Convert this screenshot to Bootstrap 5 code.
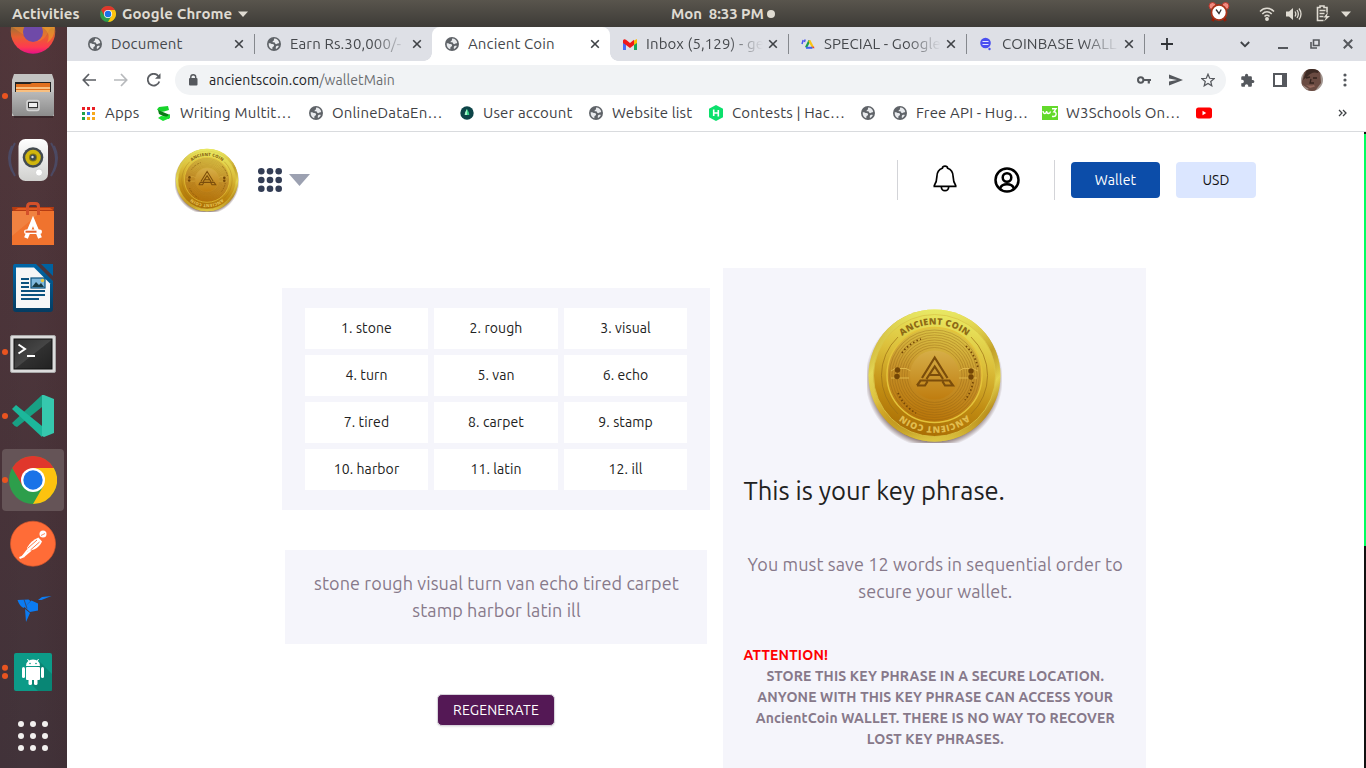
<!DOCTYPE html>
<html lang="en">
<head>
<meta charset="utf-8">
<title>Ancient Coin</title>
<link href="https://cdn.jsdelivr.net/npm/bootstrap@5.3.0/dist/css/bootstrap.min.css" rel="stylesheet">
<style>
html,body{height:100%;overflow:hidden}
body{font-family:Ubuntu,"Noto Sans","Open Sans",sans-serif;font-size:14px;line-height:20px;color:#212529;background:#fff}
svg{display:block;flex:none}
.desk{width:1366px;height:768px}
/* system bar */
.topbar{height:27px;background:linear-gradient(#59554d,#3d3b37);color:#dfdbd2;font-weight:700;font-size:15px;letter-spacing:.1px;position:relative;z-index:2}
.slot{white-space:pre}
.t-act{width:69px;margin-left:12px}.tb-ch{margin-left:19px}.t-gc{width:111px;margin-left:6px}.tri1{margin-left:5px}
.t-clock{width:92px;margin-left:423px;letter-spacing:-.08px}.tb-alarm{margin-left:433px;margin-top:-3px}.tb-wifi{margin-left:29px}.tb-vol{margin-left:11px}.tb-bat{margin-left:14px}.tb-tri{margin-left:10px}
/* dock */
.dock{width:67px;height:741px;background:linear-gradient(90deg,rgba(0,0,0,.02),rgba(0,0,0,0) 50%,rgba(40,10,10,.08)),linear-gradient(#52373b,#49343a 60%,#42333a)}
.dock-in{margin-top:-27px}
/* tabs */
.tabstrip{height:34px;background:#dee0e6;padding-left:9px}
.ctab{width:178px;height:34px;padding-left:13px;position:relative;color:#45484c;font-size:15px;letter-spacing:.12px}
.ctab:first-child{padding-left:12px}
.ctab:first-child .x{margin-left:14px}
.ctab .ttl{width:109px;margin-left:9px;overflow:hidden;white-space:nowrap}
.ctab .x{margin-left:13px}
.ctab.sep::after{content:"";position:absolute;right:-1px;top:7px;height:20px;width:1px;background:#85888d}
.ctab .ttl.fade-r{width:118px;-webkit-mask-image:linear-gradient(90deg,#000 82px,transparent 117px)}
.ctab .fade-r + .x{margin-left:4px}
.ctab.on{background:#fff;border-radius:8px 8px 0 0}
.ctab.on::before,.ctab.on::after{content:"";position:absolute;bottom:0;width:8px;height:8px}
.ctab.on::before{left:-8px;background:radial-gradient(circle at 0 0,transparent 7.5px,#fff 8px)}
.ctab.on::after{right:-8px;background:radial-gradient(circle at 100% 0,transparent 7.5px,#fff 8px)}
.plus{margin-left:17px}.wc1{margin-left:67px}.wc2{margin-left:28px}.wc3{margin-left:22px}.wc4{margin-left:23px}
/* toolbar */
.toolbar{height:38px;padding-left:15px}
.omni{width:1051px;height:30px;border-radius:15px;background:#f1f3f5;margin-left:14px;padding-left:11px}
.omni .url{width:928px;margin-left:9px;color:#6a6d70;font-size:14px;letter-spacing:.1px}
.omni .url b{font-weight:400;color:#202124}
.fwd{margin-left:18px}.rel{margin-left:19px}.snd{margin-left:18px}.str{margin-left:18px}.pz{margin-left:14px}.sp{margin-left:18px}.av{margin-left:14px}.kb{margin-left:20px}
/* bookmarks */
.marks{height:33px;padding-left:14px;padding-bottom:4px;border-bottom:1px solid #d9dbde;color:#3f4246;font-size:15px;letter-spacing:.16px}
.marks .bm{height:26px}
.marks .bm svg{margin-right:9px}
.marks .k1 svg{margin-right:10px}
.marks .k9 svg{margin-right:8px}
.k1{width:76px}.k2{width:152px}.k3{width:151px}.k4{width:129px}.k5{width:120px}.k6{width:152px}.k7{width:32px}.k8{width:149px}.k9{width:154px}.k10{width:142px}
/* page */
.page{height:636px;position:relative;overflow:hidden;letter-spacing:.1px}
.hdr{height:96px;padding-left:108px}
.grd{margin-left:19px}.tr2{margin-left:7px}.v1{margin-left:587px}.bell{margin-left:35px;margin-top:-3px}.usr{margin-left:37px}.v2{margin-left:34px}
.vline{width:1px;height:40px;background:#d3d4d8}
.btn-w{width:89px;height:36px;border-radius:4px;font-size:14px;padding:0;line-height:36px;border:0;letter-spacing:.15px}
.btn-wallet,.btn-wallet:hover{background:#0c4da9;color:#fff}
.btn-usd,.btn-usd:hover{background:#dbe6ff;color:#121212;width:80px}
.panel{background:#f5f5fb}
.left{width:428px;margin-left:215px;margin-top:60px}
.words{height:222px;padding:20px 23px;display:grid;grid-template-columns:123px 124px 123px;gap:6px;grid-auto-rows:41px}
.words div{background:#fff;font-size:14px;line-height:40px;text-align:center;color:#212121}
.phrase{width:422px;height:94px;margin:40px 0 0 3px;padding:20px 0 0 1px;color:#87798a;font-size:18px;line-height:27px;text-align:center}
.btn-regen,.btn-regen:hover{width:118px;height:32px;margin:50px 0 0 155px;background:#541855;border:1px solid #d8d4dc;border-radius:5px;color:#fff;font-size:14px;line-height:30px;padding:0;letter-spacing:.15px;box-shadow:0 1px 2px rgba(0,0,0,.1)}
.right{width:423px;height:520px;margin-left:13px;margin-top:40px;padding:40px 20px 0 20.5px}
.right h2{font-size:25.6px;line-height:34px;font-weight:400;margin:31px 0 0;color:#212121;letter-spacing:0}
.save{font-size:18px;line-height:27px;color:#87798a;text-align:center;margin:43px 0 0;padding-left:1px}
.warn{font-size:14px;line-height:21px;font-weight:700;color:#87798a;text-align:center;margin:40px 0 0;letter-spacing:.15px}
.warn .att{color:#f00;text-align:left;letter-spacing:.2px}
.warn .msg{padding-left:1px}
.sbar{position:absolute;right:0;top:0;width:2px;height:636px;background:linear-gradient(#111 2px,#00ff5e 2px,#00ff5e 414px,#111 414px)}
</style>
</head>
<body>
<svg width="0" height="0" class="position-absolute">
<defs>
<linearGradient id="rim" x1="0" y1="0" x2="1" y2="1"><stop offset="0" stop-color="#c9a52a"/><stop offset=".12" stop-color="#b98a1a"/><stop offset=".25" stop-color="#f0ee6a"/><stop offset=".45" stop-color="#d9b02c"/><stop offset=".62" stop-color="#a87406"/><stop offset=".75" stop-color="#f0e95f"/><stop offset=".88" stop-color="#a56f08"/><stop offset="1" stop-color="#e3cf4b"/></linearGradient>
<linearGradient id="rim2" x1="0" y1="0" x2="0" y2="1"><stop offset="0" stop-color="#e8e864"/><stop offset=".3" stop-color="#dfd14c" stop-opacity=".5"/><stop offset=".7" stop-color="#b07a0a" stop-opacity=".1"/><stop offset="1" stop-color="#dcc440"/></linearGradient>
<linearGradient id="face" x1=".6" y1="0" x2=".4" y2="1"><stop offset="0" stop-color="#e9e860"/><stop offset=".35" stop-color="#dcbf3a"/><stop offset=".7" stop-color="#c08b12"/><stop offset="1" stop-color="#a96d04"/></linearGradient>
<linearGradient id="inner" x1=".6" y1="0" x2=".4" y2="1"><stop offset="0" stop-color="#dcc647"/><stop offset=".5" stop-color="#c7922a"/><stop offset="1" stop-color="#b87408"/></linearGradient>
<linearGradient id="core" x1="0" y1="0" x2="0" y2="1"><stop offset="0" stop-color="#d6ae48"/><stop offset="1" stop-color="#bf7d10"/></linearGradient>
<radialGradient id="shade"><stop offset=".88" stop-color="#4b2b23" stop-opacity=".75"/><stop offset="1" stop-color="#4b2b23" stop-opacity="0"/></radialGradient>
<path id="arcT" d="M16.500 67.500a51 51 0 0 1 102 0"/>
<symbol id="coin" viewBox="0 0 135 135">
<circle cx="67" cy="71" r="69" fill="url(#shade)"/>
<circle cx="67.500" cy="67.500" r="66" fill="url(#rim)"/><circle cx="67.500" cy="67.500" r="66" fill="url(#rim2)"/>
<circle cx="67.500" cy="67.500" r="61" fill="url(#face)" stroke="#d9c548" stroke-width=".8"/>
<path d="M31 29A53 53 0 0 0 31 106M104 29A53 53 0 0 1 104 106" fill="none" stroke="#9c7016" stroke-width=".7"/>
<circle cx="67.500" cy="67" r="47.500" fill="url(#inner)" stroke="#e4c33a" stroke-width="1.500"/>
<g fill="none" stroke="#8f5f12" stroke-width=".6" opacity=".6"><circle cx="67.500" cy="67" r="45"/><circle cx="67.500" cy="67" r="42.500"/><circle cx="67.500" cy="67" r="40"/><circle cx="67.500" cy="67" r="37.500"/><circle cx="67.500" cy="67" r="35"/><circle cx="67.500" cy="67" r="32.500"/><circle cx="67.500" cy="67" r="30"/><circle cx="67.500" cy="67" r="27.500"/></g>
<g fill="none" stroke="#744606" stroke-width="1.700" stroke-dasharray="1.500 2.300"><path d="M35 45A39 39 0 0 1 54 31M99 38a43 43 0 0 1 12 22M31 85a41 41 0 0 0 18 20M106 74a40 40 0 0 1-8 18"/></g>
<path d="M24 63l4-2.500h11l5 2.500M24 70h18M92 63l4-2.500h10l5 2.500M92 70h18" fill="none" stroke="#e0b649" stroke-width="1"/>
<circle cx="67.500" cy="67" r="24.500" fill="url(#core)"/>
<g fill="#744606"><circle cx="30.500" cy="62" r="2.700"/><circle cx="30" cy="68.500" r="2.700"/><circle cx="104" cy="63" r="2.700"/><circle cx="104" cy="69" r="2.700"/></g>
<path d="M55 70L67.700 49.500L80.500 70M59.500 71L67.700 58.500L76 71M62 67h11.500M50 77.500l3.500-5h29l3.500 5h-8l-2.500-4M50 77.500h8l2.500-4" fill="none" stroke="#7b4d0b" stroke-width="2.200"/>
<text font-family="Open Sans, sans-serif" font-weight="800" font-size="9" letter-spacing="0" fill="#8d6a16"><textPath href="#arcT" startOffset="50%" text-anchor="middle" textLength="70">ANCIENT COIN</textPath></text>
<text font-family="Open Sans, sans-serif" font-weight="800" font-size="9" letter-spacing="0" fill="#e2bd4e" transform="rotate(180 67.500 67.500)"><textPath href="#arcT" startOffset="50%" text-anchor="middle" textLength="70">ANCIENT COIN</textPath></text>
</symbol>
<symbol id="globe" viewBox="0 0 14 14"><circle cx="7" cy="7" r="7" fill="#5f6368"/><path d="M1.700 6.300C3.300 6 4.500 7 5.500 7.100c1.400.2 1.900 1 1.400 2-.4.900-1.400.6-1.500 1.700l-.1 1.500C3 11.700 1.400 9.500 1.700 6.300zM7.200 1.600c2.700 0 4.600 1.800 5 4.300-.9.700-1.500.2-2.200.9-.8.700-1.900.2-2-.8-.2-1-1.600-.3-2.300-.8-.6-.6.3-1.200.9-1.500.6-.3.200-1.300.6-2.100zM9.500 9c1-.5 2-.3 2.300.1-.5 1.400-1.500 2.300-2.800 2.900-.4-1.100-.3-2.400.5-3z" fill="#e8eaed"/></symbol>
<symbol id="x" viewBox="0 0 10 10"><path d="M1.200 1.200l7.600 7.600M8.800 1.200L1.200 8.800" stroke="#3f4246" stroke-width="1.600"/></symbol>
<symbol id="chrome" viewBox="0 0 48 48"><circle cx="24" cy="24" r="24" fill="#2d9e4b"/><path d="M3.200 12A24 24 0 0 1 44.800 12L24 12L13.600 30z" fill="#e0372c"/><path d="M44.800 12A24 24 0 0 1 24 48L34.400 30L24 12z" fill="#fdc20f"/><circle cx="24" cy="24" r="12" fill="#fff"/><circle cx="24" cy="24" r="9.700" fill="#1a73e8"/></symbol>
<linearGradient id="gf" x1="0" y1="0" x2="0" y2="1"><stop offset=".4" stop-color="#a07036"/><stop offset=".62" stop-color="#e76030"/><stop offset=".85" stop-color="#ff3a50"/><stop offset="1" stop-color="#e3108a"/></linearGradient>
<linearGradient id="gm" x1="0" y1="0" x2="0" y2="1"><stop offset="0" stop-color="#b9b9b9"/><stop offset="1" stop-color="#8b8b8b"/></linearGradient>
<linearGradient id="gw" x1="0" y1="0" x2="0" y2="1"><stop offset="0" stop-color="#fff"/><stop offset="1" stop-color="#d0d0ce"/></linearGradient>
<linearGradient id="gb" x1="0" y1="0" x2="0" y2="1"><stop offset="0" stop-color="#0067a8"/><stop offset="1" stop-color="#053c61"/></linearGradient>
<linearGradient id="gt" x1="0" y1="0" x2="1" y2="1"><stop offset="0" stop-color="#303030"/><stop offset=".5" stop-color="#454545"/><stop offset=".52" stop-color="#303030"/><stop offset="1" stop-color="#222"/></linearGradient>
</defs>
</svg>

<div class="desk overflow-hidden">
<header class="topbar d-flex align-items-center">
  <span class="slot t-act">Activities</span>
  <svg class="tb-ch" width="16" height="16"><use href="#chrome"/></svg>
  <span class="slot t-gc">Google Chrome</span>
  <svg width="10" height="6" class="tri1"><path d="M0 .5h10L5 6z" fill="#dfdbd2"/></svg>
  <span class="slot t-clock">Mon  8:33 PM</span>
  <svg width="8" height="8" class="ms-1"><circle cx="4" cy="4" r="4" fill="#dfdbd2"/></svg>
  <svg class="tb-alarm" width="22" height="22" viewBox="0 0 22 22"><circle cx="4.500" cy="5" r="3.500" fill="#f08a80" stroke="#b8382c"/><circle cx="17.500" cy="5" r="3.500" fill="#f08a80" stroke="#b8382c"/><path d="M6 17l-1.500 3M16 17l1.500 3" stroke="#8d1f0c" stroke-width="3"/><circle cx="11" cy="11.500" r="7.600" fill="#fff" stroke="#a83218" stroke-width="1.800"/><path d="M8 8.500l3 4 2.200-4" fill="none" stroke="#333" stroke-width="1.300"/></svg>
  <svg class="tb-wifi" width="16" height="14" viewBox="0 0 16 14" fill="none" stroke="#dfdbd2" stroke-width="1.500"><path d="M1 4.500C5 .3 11 .3 15 4.500"/><path d="M3.300 7c2.800-2.900 6.600-2.900 9.400 0"/><path d="M5.500 9.500c1.500-1.600 3.500-1.600 5 0"/><circle cx="8" cy="12" r="1.200" fill="#dfdbd2"/></svg>
  <svg class="tb-vol" width="16" height="14" viewBox="0 0 16 14"><path d="M0 4.500h3L7 1v12L3 9.500H0z" fill="#dfdbd2"/><path d="M9 4.500q1.600 2.500 0 5M11 3q2.700 4 0 8M13 1.500q4 5.500 0 11" stroke="#dfdbd2" stroke-width="1.300" fill="none"/></svg>
  <svg class="tb-bat" width="15" height="17" viewBox="0 0 15 17"><path d="M7.500 15.500h-6v-13H4V1h4v1.500h3v5" fill="none" stroke="#dfdbd2" stroke-width="1.600"/><path d="M3.500 5.500h6M3.500 8.500h5M3.500 11.500h4" stroke="#dfdbd2" stroke-width="1.500"/><path d="M12 7L7.500 12.500h2.500L8 16.500l6-5.500h-3z" fill="#dfdbd2"/></svg>
  <svg width="10" height="6" class="tb-tri"><path d="M0 .5h10L5 6z" fill="#dfdbd2"/></svg>
</header>
<div class="d-flex">
<nav class="dock flex-shrink-0 overflow-hidden"><div class="dock-in">
<svg width="67" height="64"><circle cx="33" cy="31.500" r="22.300" fill="url(#gf)"/><path d="M11 26h44v4q-3-4-6 0-3 8-9 11-10 2-16-6z" fill="#f58a2e" opacity=".45"/><ellipse cx="33" cy="32" rx="10" ry="10" fill="#6f4aa8"/><path d="M42 27q10 6 5 16 9-6 7-17z" fill="#f0a02c" opacity=".6"/></svg>
<svg width="67" height="64"><circle cx="5" cy="32" r="3" fill="#e95420"/><path d="M14 10h38l2 6v36H12V16z" fill="#c3c3c2"/><rect x="15" y="18" width="36" height="12" fill="#222"/><path d="M16 20h14l2-1h18v10H16z" fill="#e07020"/><path d="M16 24h34M16 27h34" stroke="#ffd9a0" stroke-width="1.500"/><path d="M12 28h42v22l-1 2H14l-2-3z" fill="url(#gm)"/><rect x="27" y="36.500" width="12" height="10" rx="2" fill="#aaa" stroke="#d5d5d5" stroke-width="1.500"/><rect x="28.500" y="38.500" width="9" height="5" fill="#eee" stroke="#333"/><path d="M14 53h39" stroke="#2b1d20" stroke-width="1"/></svg>
<svg width="67" height="64"><g fill="none" stroke="#4b5b86" stroke-width="2" opacity=".55"><path d="M15 15q-10 16 0 33M51 15q10 16 0 33M12 18q-6 12 0 25M54 18q6 12 0 25"/></g><rect x="18.500" y="11" width="29.500" height="42" rx="7" fill="url(#gw)"/><circle cx="33" cy="29.500" r="10.300" fill="#434b50"/><circle cx="33" cy="29.500" r="7.800" fill="#d0b60e"/><circle cx="33" cy="29.500" r="4" fill="#8a7a10"/><circle cx="33" cy="29.500" r="3" fill="#3c4b52"/><circle cx="32.500" cy="29" r="1.200" fill="#ddd"/><circle cx="39" cy="44.500" r="3.500" fill="#fff" stroke="#c9c9c9" stroke-width=".7"/></svg>
<svg width="67" height="64"><path d="M12 15h42l-1 7H13z" fill="#b53c12"/><path d="M15 18l3-2h32l3 2z" fill="#e05a20"/><path d="M12 19h42v34H12z" fill="#f0732e"/><path d="M12 19h30L12 44z" fill="#f08c4e" opacity=".6"/><path d="M27.500 23v-8q0-3.500 3-3.500h5q3 0 3 3.500v8" fill="none" stroke="#d3502a" stroke-width="3"/><path d="M26 46l7-17 7 17" fill="none" stroke="#fff" stroke-width="4"/><rect x="24" y="37.500" width="18" height="4.500" rx="2.200" fill="#fff"/><path d="M25.500 39.700h11" stroke="#e4602a" stroke-width="2"/></svg>
<svg width="67" height="64"><path d="M15 8h21l17 17v28q0 3-3 3H16q-3 0-3-3V11q0-3 2-3z" fill="url(#gb)"/><path d="M41 8h12v12z" fill="#0062a0"/><path d="M16 11.500h18l16 16V52H16z" fill="#f6f6f6"/><path d="M21 23h8M21 27h8M21 31h8M21 35h24M21 39h24M21 43h18" stroke="#0b527e" stroke-width="2"/><rect x="31" y="22" width="14" height="10" fill="#7fb8dc" stroke="#0b527e" stroke-width="1.200"/><path d="M32 31l4-5 3 3 2-2 3 4z" fill="#173a42"/><circle cx="42.500" cy="24.500" r="1.700" fill="#e9c83d"/></svg>
<svg width="67" height="64"><circle cx="5" cy="32" r="3" fill="#e95420"/><rect x="10.500" y="15.500" width="45" height="37" rx="1.500" fill="#dcdcdc" stroke="#a8a8a8"/><rect x="14" y="19" width="38" height="30" fill="url(#gt)" stroke="#111"/><path d="M18.500 24.500l6.500 4.500-6.500 4.500" fill="none" stroke="#fff" stroke-width="2"/><path d="M27 36h8" stroke="#fff" stroke-width="2"/></svg>
<svg width="67" height="64"><circle cx="5" cy="32" r="3" fill="#e95420"/><path d="M42 11v12L17 43q-3-1-5-4z" fill="#18a084"/><path d="M12 25l4-4 26 21v11z" fill="#1cb79b"/><path d="M42 11l2 0 10 4v34l-10 4-2-1z" fill="#36c8ae"/></svg>
<svg width="67" height="64"><rect x="2" y="1" width="62" height="62" rx="4" fill="#655457"/><circle cx="5" cy="32" r="3" fill="#e95420"/><use href="#chrome" x="9" y="8" width="48" height="48"/></svg>
<svg width="67" height="64"><circle cx="33" cy="31.700" r="22.500" fill="#ff6c37" stroke="#d8572c" stroke-width=".7"/><path d="M38.500 25.500l3.500 4q-2 5-8 8l-6 1.500-.8-3.500q4-7 11.300-10z" fill="#fff"/><path d="M28 37.500l-5.500 7M31 38l-7 6" stroke="#fff" stroke-width="1.800"/><path d="M28 36l9-8M30.500 38l9-8" stroke="#ff6c37" stroke-width=".9"/><circle cx="43" cy="22" r="3.500" fill="#fff"/><path d="M41 23.500l4-2" stroke="#ff6c37" stroke-width=".8"/><path d="M19.500 46l5-2" stroke="#fff" stroke-width="2"/></svg>
<svg width="67" height="64"><g fill="#0b7bf2"><path d="M17.500 24l11-.5 2 1.500-7 7q-4-2-6-8zM38 24l4-3 9.500-1-10 4zM31.500 24.500l6.500 3v7l-8 1.500-5.500-5zM25 33l5 4-4 9z"/></g><path d="M24 23.500l3 9" stroke="#4a343a" stroke-width=".7"/></svg>
<svg width="67" height="64"><circle cx="5" cy="27.700" r="3" fill="#e95420"/><circle cx="5" cy="36" r="3" fill="#e95420"/><rect x="14" y="13" width="38" height="38" rx="2" fill="#0c9b88"/><path d="M40 22l12 12v17H38L27 40z" fill="#087e6e" opacity=".7"/><g fill="#fff"><path d="M26 26q0-6 7-6.500 7 .5 7 6.500z"/><rect x="26" y="27" width="14" height="13" rx="1"/><rect x="22" y="27" width="3" height="11" rx="1.500"/><rect x="41" y="27" width="3" height="11" rx="1.500"/><rect x="28.500" y="38" width="3.500" height="7" rx="1.500"/><rect x="34" y="38" width="3.500" height="7" rx="1.500"/></g><path d="M29 21.500l-1.500-2.500M37 21.500l1.500-2.500" stroke="#fff" stroke-width="1"/><g fill="#0c9b88"><circle cx="30" cy="23.500" r=".8"/><circle cx="36" cy="23.500" r=".8"/></g></svg>
<svg width="67" height="64"><g fill="#f2f0ee"><circle cx="21" cy="20" r="3"/><circle cx="33" cy="20" r="3"/><circle cx="45" cy="20" r="3"/><circle cx="21" cy="32" r="3"/><circle cx="33" cy="32" r="3"/><circle cx="45" cy="32" r="3"/><circle cx="21" cy="44" r="3"/><circle cx="33" cy="44" r="3"/><circle cx="45" cy="44" r="3"/></g></svg>
</div></nav>
<div class="flex-grow-1">
<div class="tabstrip d-flex">
  <div class="ctab sep d-flex align-items-center"><svg width="14" height="14"><use href="#globe"/></svg><div class="ttl">Document</div><svg class="x" width="10" height="10"><use href="#x"/></svg></div>
  <div class="ctab d-flex align-items-center"><svg width="14" height="14"><use href="#globe"/></svg><div class="ttl fade-r">Earn Rs.30,000/-</div><svg class="x" width="10" height="10"><use href="#x"/></svg></div>
  <div class="ctab on d-flex align-items-center"><svg width="14" height="14"><use href="#globe"/></svg><div class="ttl">Ancient Coin</div><svg class="x" width="10" height="10"><use href="#x"/></svg></div>
  <div class="ctab sep d-flex align-items-center"><svg width="14" height="11" viewBox="0 0 14 11"><path d="M0 1.500V11h3V4z" fill="#4a6cf7"/><path d="M14 1.500V11h-3V4z" fill="#1aa75a"/><path d="M11 1.500L14 0v4l-3 2z" fill="#fbbc04"/><path d="M0 1.500Q1-.5 3 .800L7 4l4-3.200L11 6 7 9 3 6 0 4z" fill="#f01818"/></svg><div class="ttl fade-r">Inbox (5,129) - ge</div><svg class="x" width="10" height="10"><use href="#x"/></svg></div>
  <div class="ctab sep d-flex align-items-center"><svg width="14" height="12" viewBox="0 0 14 12"><path d="M2.200 2L1 6M4.200 1.500l-.8 2.500" stroke="#4a56f0" stroke-width="1.500"/><path d="M8.500 2.500L5 9.500" stroke="#1b9e4a" stroke-width="2.300"/><path d="M8.300 2.500l3.700 7" stroke="#fbc512" stroke-width="2.300"/><path d="M5 9.800h6.500" stroke="#3e63f0" stroke-width="2"/><path d="M10.800 8.800h2.400v2z" fill="#e33"/></svg><div class="ttl fade-r">SPECIAL - Google</div><svg class="x" width="10" height="10"><use href="#x"/></svg></div>
  <div class="ctab sep d-flex align-items-center"><svg width="14" height="14" viewBox="0 0 14 14"><circle cx="6.500" cy="6" r="5.300" fill="#4a4ff0"/><path d="M3.500 4.500h6M3.500 7.500h6" stroke="#dfe1ff" stroke-width="1.200"/><circle cx="10.500" cy="12" r="1.200" fill="#4a4ff0"/></svg><div class="ttl fade-r">COINBASE WALL</div><svg class="x" width="10" height="10"><use href="#x"/></svg></div>
  <svg class="plus align-self-center" width="12" height="12"><path d="M6 0v12M0 6h12" stroke="#2f3236" stroke-width="1.800"/></svg>
  <svg class="align-self-center wc1" width="10" height="7"><path d="M.8 1L5 5.200 9.200 1" fill="none" stroke="#3f4246" stroke-width="1.800"/></svg>
  <svg class="align-self-center wc2" width="10" height="10"><path d="M0 9h10" stroke="#55585d" stroke-width="2"/></svg>
  <svg class="align-self-center wc3" width="10" height="10"><path d="M3.500 1h5.500v5.500H3.500z" fill="none" stroke="#55585d" stroke-width="1.600"/><path d="M1 3v6h6" fill="none" stroke="#55585d" stroke-width="1.600"/></svg>
  <svg class="align-self-center wc4" width="10" height="10"><path d="M.8.8l8.400 8.400M9.200.8L.8 9.200" stroke="#55585d" stroke-width="2"/></svg>
</div>
<div class="toolbar d-flex align-items-center">
  <svg width="14" height="14" viewBox="0 0 14 14" fill="none" stroke="#5b5e63" stroke-width="1.700"><path d="M14 7H1.500M7 1L1.300 7 7 13"/></svg>
  <svg class="fwd" width="14" height="14" viewBox="0 0 14 14" fill="none" stroke="#b7b9bc" stroke-width="1.700"><path d="M0 7h12.500M7 1l5.700 6L7 13"/></svg>
  <svg class="rel" width="14" height="14" viewBox="0 0 14 14"><path d="M12.300 8.500A5.900 5.900 0 1 1 11.300 3" fill="none" stroke="#5b5e63" stroke-width="1.800"/><path d="M13.500.3v5.500H8z" fill="#5b5e63"/></svg>
  <div class="omni d-flex align-items-center">
    <svg width="14" height="14" viewBox="0 0 14 14"><rect x="3" y="5" width="8.500" height="7.500" rx="1" fill="#55585d"/><path d="M4.800 5.500V4q0-2.200 2.400-2.200T9.700 4v1.500" fill="none" stroke="#55585d" stroke-width="1.400"/></svg>
    <div class="url"><b>ancientscoin.com</b>/walletMain</div>
    <svg width="14" height="10" viewBox="0 0 14 10"><circle cx="3.700" cy="5" r="2.700" fill="none" stroke="#55585d" stroke-width="2"/><path d="M6 5h8M11.800 5v3.500" stroke="#55585d" stroke-width="2.200"/></svg>
    <svg class="snd" width="14" height="12" viewBox="0 0 14 12"><path d="M0 .5L14 6 0 11.500V7.500L8 6 0 4.500z" fill="#55585d"/></svg>
    <svg class="str" width="14" height="14" viewBox="0 0 24 24"><path d="M12 2l2.900 7 7.600.6-5.800 5 1.800 7.400-6.500-4-6.500 4 1.800-7.400-5.800-5L9.100 9z" fill="none" stroke="#55585d" stroke-width="2.100"/></svg>
  </div>
  <svg class="pz" width="15" height="15" viewBox="0 0 24 24"><path d="M20.500 11H19V7c0-1.100-.9-2-2-2h-4V3.500a2.500 2.500 0 0 0-5 0V5H4c-1.100 0-2 .9-2 2v3.800h1.500a2.700 2.700 0 0 1 0 5.400H2V20c0 1.100.9 2 2 2h3.800v-1.500a2.700 2.700 0 0 1 5.400 0V22H17c1.100 0 2-.9 2-2v-4h1.500a2.500 2.500 0 0 0 0-5z" fill="#55585d"/></svg>
  <svg class="sp" width="14" height="14"><path d="M1 1h12v12H1z" fill="#fff" stroke="#55585d" stroke-width="2"/><path d="M9 0h5v14H9z" fill="#55585d"/></svg>
  <svg class="av" width="22" height="22" viewBox="0 0 22 22"><clipPath id="cv"><circle cx="11" cy="11" r="11"/></clipPath><g clip-path="url(#cv)"><path fill="#a39791" d="M0 0h22v22H0z"/><path d="M4 0h15l1 14-6 8H6L0 16z" fill="#6a4b42"/><path d="M6 0h13l-2 4q-6-2-10 3L2 11z" fill="#3d2a24"/><path d="M5 9l4-1M12 9l4 0M10 10l-1 4 4 0" stroke="#33231d" stroke-width="1.300" fill="none"/><path d="M5 16q5 1 8 0l1 1.500-5 1.500z" fill="#94685c"/><path d="M0 15l8 5-5 2z" fill="#a08c84"/></g></svg>
  <svg class="kb" width="4" height="14"><g fill="#55585d"><circle cx="2" cy="2" r="1.600"/><circle cx="2" cy="7" r="1.600"/><circle cx="2" cy="12" r="1.600"/></g></svg>
</div>
<div class="marks d-flex align-items-center">
  <div class="bm k1 d-flex align-items-center slot"><svg width="14" height="14"><path d="M1 1h3v3H1zM6 1h3v3H6zM11 1h3v3h-3z" fill="#ea1f25"/><path d="M1 6h3v3H1zM1 11h3v3H1z" fill="#1fa34a"/><path d="M6 6h3v3H6z" fill="#3b78f0"/><path d="M11 6h3v3h-3zM6 11h3v3H6zM11 11h3v3h-3z" fill="#f7a81b"/></svg><span>Apps</span></div>
  <div class="bm k2 d-flex align-items-center slot"><svg width="14" height="15" viewBox="0 0 14 15"><path d="M2 1l9-1 1 4-5 1.500L3 6 0 3.500z" fill="#17d42b"/><path d="M1 4l12 5-1 4-10-5z" fill="#0a7c16"/><path d="M13 8v4l-7 3-5-3 3-2 6 .5z" fill="#1be231"/></svg><span>Writing Multit…</span></div>
  <div class="bm k3 d-flex align-items-center slot"><svg width="14" height="14"><use href="#globe"/></svg><span>OnlineDataEn…</span></div>
  <div class="bm k4 d-flex align-items-center slot"><svg width="14" height="14"><circle cx="7" cy="7" r="6.700" fill="#0d4448"/><path d="M7 3q2.500 4 2.200 6H4.800Q4.500 7 7 3z" fill="#3bd38b"/><path d="M7 3q-2.500 4-2.200 6H7z" fill="#a5f0c8"/></svg><span>User account</span></div>
  <div class="bm k5 d-flex align-items-center slot"><svg width="14" height="14"><use href="#globe"/></svg><span>Website list</span></div>
  <div class="bm k6 d-flex align-items-center slot"><svg width="14" height="16" viewBox="0 0 14 16"><path d="M7 0l7 3.700v8.600L7 16 0 12.300V3.700z" fill="#0ce06c"/><path d="M4.700 4.500v6.500M9.300 5v6.500M4.700 8h4.600" stroke="#fff" stroke-width="1.600"/></svg><span>Contests | Hac…</span></div>
  <div class="bm k7 d-flex align-items-center slot"><svg width="14" height="14"><use href="#globe"/></svg></div>
  <div class="bm k8 d-flex align-items-center slot"><svg width="14" height="14"><use href="#globe"/></svg><span>Free API - Hug…</span></div>
  <div class="bm k9 d-flex align-items-center slot"><svg width="16" height="14"><rect width="16" height="14" fill="#63d92b"/><path d="M1 5q.3 2.500 1.800 2.500T4.600 5q0 2.500 1.800 2.500T8.500 5.500M10 2.800h4l-2.200 3q2.700.2 2.200 3-.6 2.300-4 1.500" stroke="#fff" stroke-width="1.400" fill="none"/></svg><span>W3Schools On…</span></div>
  <div class="bm k10 d-flex align-items-center slot"><svg width="16" height="12"><rect width="16" height="11" rx="2.500" y=".5" fill="#f00"/><path d="M6.500 3.800v4.400L10.200 6z" fill="#fff"/></svg></div>
  <svg width="10" height="8"><path d="M1 1l3 3-3 3M5 1l3 3-3 3" fill="none" stroke="#3f4246" stroke-width="1.300"/></svg>
</div>
<main class="page">
  <div class="hdr d-flex align-items-center">
    <svg width="64" height="64"><use href="#coin"/></svg>
    <svg class="grd" width="24" height="24"><g fill="#333d55"><circle cx="3.300" cy="3.300" r="3.300"/><circle cx="12" cy="3.300" r="3.300"/><circle cx="20.700" cy="3.300" r="3.300"/><circle cx="3.300" cy="12" r="3.300"/><circle cx="12" cy="12" r="3.300"/><circle cx="20.700" cy="12" r="3.300"/><circle cx="3.300" cy="20.700" r="3.300"/><circle cx="12" cy="20.700" r="3.300"/><circle cx="20.700" cy="20.700" r="3.300"/></g></svg>
    <svg class="tr2" width="21" height="12"><path d="M0 0h21L10.500 12z" fill="#9ca1b1"/></svg>
    <div class="vline v1"></div>
    <svg class="bell" width="24" height="28" viewBox="0 0 24 28" fill="none" stroke="#000" stroke-width="1.700"><path d="M12 1.200q-2.400 0-2.600 2Q4 5 3.900 11.500 3.800 17 1.300 20.500v.9h21.400v-.9Q20.200 17 20.100 11.500 20 5 14.600 3.200 14.400 1.200 12 1.200z"/><path d="M8.300 21.700q.3 4 3.700 4t3.700-4"/></svg>
    <svg class="usr" width="26" height="26" viewBox="0 0 26 26" fill="none" stroke="#000" stroke-width="2.500"><circle cx="13" cy="13" r="11.500"/><circle cx="13" cy="10.500" r="4.300"/><path d="M6 21.500q1.500-4.200 7-4.200t7 4.200"/></svg>
    <div class="vline v2"></div>
    <button class="btn btn-w btn-wallet ms-3">Wallet</button>
    <button class="btn btn-w btn-usd ms-3">USD</button>
  </div>
  <div class="d-flex align-items-start">
    <section class="left">
      <div class="words panel">
        <div>1. stone</div><div>2. rough</div><div>3. visual</div>
        <div>4. turn</div><div>5. van</div><div>6. echo</div>
        <div>7. tired</div><div>8. carpet</div><div>9. stamp</div>
        <div>10. harbor</div><div>11. latin</div><div>12. ill</div>
      </div>
      <div class="phrase panel">stone rough visual turn van echo tired carpet<br>stamp harbor latin ill</div>
      <button class="btn btn-regen">REGENERATE</button>
    </section>
    <section class="right panel">
      <svg width="135" height="135" class="mx-auto"><use href="#coin"/></svg>
      <h2>This is your key phrase.</h2>
      <p class="save">You must save 12 words in sequential order to<br>secure your wallet.</p>
      <div class="warn"><div class="att">ATTENTION!</div><div class="msg">STORE THIS KEY PHRASE IN A SECURE LOCATION.<br>ANYONE WITH THIS KEY PHRASE CAN ACCESS YOUR<br>AncientCoin WALLET. THERE IS NO WAY TO RECOVER<br>LOST KEY PHRASES.</div></div>
    </section>
  </div>
  <div class="sbar"></div>
</main>
</div>
</div>
</div>
<script src="https://cdn.jsdelivr.net/npm/bootstrap@5.3.0/dist/js/bootstrap.bundle.min.js"></script>
</body>
</html>
